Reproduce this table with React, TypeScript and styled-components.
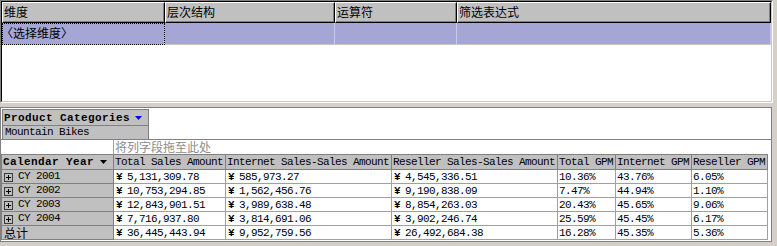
import React from 'react';
import styled, { createGlobalStyle } from 'styled-components';

const GlobalStyle = createGlobalStyle`
  html, body {
    margin: 0;
    padding: 0;
    background: #d4d0c8;
  }
  body {
    font-family: "Noto Sans CJK SC", "Liberation Sans", sans-serif;
    font-size: 12px;
    color: #000;
  }
`;

const MONO = `"Liberation Mono", "Noto Sans CJK SC", monospace`;

const filterColumns = ['维度', '层次结构', '运算符', '筛选表达式'];

const measures = [
  'Total Sales Amount',
  'Internet Sales-Sales Amount',
  'Reseller Sales-Sales Amount',
  'Total GPM',
  'Internet GPM',
  'Reseller GPM',
];

const rows = [
  { label: 'CY 2001', cells: ['5,131,309.78', '585,973.27', '4,545,336.51', '10.36%', '43.76%', '6.05%'] },
  { label: 'CY 2002', cells: ['10,753,294.85', '1,562,456.76', '9,190,838.09', '7.47%', '44.94%', '1.10%'] },
  { label: 'CY 2003', cells: ['12,843,901.51', '3,989,638.48', '8,854,263.03', '20.43%', '45.65%', '9.06%'] },
  { label: 'CY 2004', cells: ['7,716,937.80', '3,814,691.06', '3,902,246.74', '25.59%', '45.45%', '6.17%'] },
  { label: '总计', total: true, cells: ['36,445,443.94', '9,952,759.56', '26,492,684.38', '16.28%', '45.35%', '5.36%'] },
];

const DownArrow = ({ color }: { color: string }) => (
  <svg width="7" height="4" viewBox="0 0 7 4">
    <polygon points="0,0 7,0 3.5,4" fill={color} />
  </svg>
);

const ExpandBox = () => (
  <svg width="9" height="9" viewBox="0 0 9 9">
    <rect x="0.5" y="0.5" width="8" height="8" fill="none" stroke="#3a3a3a" />
    <line x1="2" y1="4.5" x2="7" y2="4.5" stroke="#000" />
    <line x1="4.5" y1="2" x2="4.5" y2="7" stroke="#000" />
  </svg>
);

const App = () => {
  return (
    <>
      <GlobalStyle />
      <Window>
        <FilterPanel>
          <FilterInner>
            <FilterGrid>
              {filterColumns.map((c) => (
                <HeadCell key={c}>{c}</HeadCell>
              ))}
              <SelCell $focus>
                <SelText>〈选择维度〉</SelText>
              </SelCell>
              <SelCell />
              <SelCell />
              <SelCell />
            </FilterGrid>
          </FilterInner>
        </FilterPanel>

        <PivotPanel>
          <FilterZone>
            <FieldHead>
              Product Categories
              <DownArrow color="#0000ff" />
            </FieldHead>
            <FieldValue>Mountain Bikes</FieldValue>
          </FilterZone>

          <PivotGrid>
            <DropCorner />
            <DropCell>
              <CjkText>将列字段拖至此处</CjkText>
            </DropCell>

            <RowAxisHead>
              Calendar Year
              <DownArrow color="#000" />
            </RowAxisHead>
            {measures.map((m) => (
              <MeasureHead key={m}>{m}</MeasureHead>
            ))}

            {rows.map((r) => (
              <React.Fragment key={r.label}>
                <RowHead>
                  {!r.total && <ExpandBox />}
                  {r.total ? <CjkText>{r.label}</CjkText> : <RowLabel>{r.label}</RowLabel>}
                </RowHead>
                {r.cells.map((v, i) => (
                  <DataCell key={i}>
                    {i < 3 && <Yen>¥</Yen>}
                    {v}
                  </DataCell>
                ))}
              </React.Fragment>
            ))}
          </PivotGrid>
        </PivotPanel>
      </Window>
    </>
  );
};

const Window = styled.div`
  width: 777px;
  height: 246px;
  box-sizing: border-box;
  padding-right: 4px;
  display: flex;
  flex-direction: column;
  overflow: hidden;
  background: #d4d0c8;
`;

const FilterPanel = styled.div`
  height: 103px;
  flex-shrink: 0;
  box-sizing: border-box;
  border: 1px solid;
  border-color: #808080 #ffffff #ffffff #808080;
`;

const FilterInner = styled.div`
  height: 100%;
  box-sizing: border-box;
  background: #fff;
  border: 1px solid;
  border-color: #000 #c8c8c8 #c8c8c8 #000;
`;

const FilterGrid = styled.div`
  display: grid;
  grid-template-columns: 163px 170px 122px 1fr;
`;

const HeadCell = styled.div`
  height: 21px;
  box-sizing: border-box;
  background: #c0c0c0;
  border-top: 1px solid #fff;
  border-left: 1px solid #fff;
  border-right: 1px solid #000;
  border-bottom: 1px solid #000;
  box-shadow: inset -1px -1px 0 #808080;
  padding-left: 1px;
  line-height: 18px;
  white-space: nowrap;
`;

const SelCell = styled.div<{ $focus?: boolean }>`
  height: 22px;
  box-sizing: border-box;
  background: #a6a6d6;
  border-right: 1px solid #cacae6;
  border-bottom: 1px solid #c8c8c8;
  line-height: 20px;
  white-space: nowrap;
  ${(p) => p.$focus && 'outline: 1px dotted #000; outline-offset: -1px;'}
`;

const SelText = styled.span`
  display: inline-block;
  margin-left: -1px;
`;

const PivotPanel = styled.div`
  flex: 1;
  margin-top: 4px;
  margin-bottom: 4px;
  margin-right: 1px;
  box-sizing: border-box;
  background: #fff;
  border: 1px solid #808080;
  padding-top: 1px;
  overflow: hidden;
`;

const FilterZone = styled.div`
  padding-left: 1px;
  border-bottom: 1px solid #808080;
`;

const FieldHead = styled.div`
  width: 147px;
  height: 17px;
  box-sizing: border-box;
  display: flex;
  align-items: center;
  gap: 5px;
  padding-left: 1px;
  background: #c0c0c0;
  border: 1px solid #808080;
  font: bold 11px ${MONO};
  letter-spacing: 0.4px;
  white-space: nowrap;
`;

const FieldValue = styled.div`
  width: 147px;
  height: 13px;
  box-sizing: border-box;
  padding-left: 2px;
  background: #c0c0c0;
  border-left: 1px solid #808080;
  border-right: 1px solid #808080;
  font: 11px/13px ${MONO};
  letter-spacing: -0.6px;
  white-space: nowrap;
`;

const PivotGrid = styled.div`
  display: grid;
  grid-template-columns: 113px 112px 166px 166px 58px 76px 76px;
`;

const DropCorner = styled.div`
  height: 15px;
  box-sizing: border-box;
  border-right: 1px solid #a0a0a0;
  border-bottom: 1px solid #808080;
`;

const DropCell = styled.div`
  grid-column: 2 / 8;
  height: 15px;
  box-sizing: border-box;
  padding-left: 1px;
  border-bottom: 1px solid #808080;
  color: #8c8c8c;
  display: flex;
  align-items: center;
  white-space: nowrap;
`;

const CjkText = styled.span`
  display: inline-block;
  height: 12px;
  font: 12px/12px "Noto Sans CJK SC", sans-serif;
  letter-spacing: 0;
  white-space: nowrap;
`;

const RowAxisHead = styled.div`
  height: 15px;
  box-sizing: border-box;
  display: flex;
  align-items: center;
  gap: 6px;
  padding-left: 1px;
  background: #c0c0c0;
  border-left: 1px solid #808080;
  border-right: 1px solid #808080;
  border-bottom: 1px solid #808080;
  font: bold 11px ${MONO};
  letter-spacing: 0.4px;
  white-space: nowrap;
`;

const MeasureHead = styled.div`
  height: 15px;
  box-sizing: border-box;
  padding-left: 1px;
  background: #c0c0c0;
  border-right: 1px solid #808080;
  border-bottom: 1px solid #808080;
  font: 11px/14px ${MONO};
  letter-spacing: -0.6px;
  white-space: nowrap;
`;

const RowHead = styled.div`
  height: 14px;
  box-sizing: border-box;
  display: flex;
  align-items: center;
  padding-left: 2px;
  background: #c0c0c0;
  border-left: 1px solid #808080;
  border-right: 1px solid #808080;
  border-bottom: 1px solid #808080;

  svg {
    margin-top: 2px;
    margin-right: 5px;
  }
`;

const RowLabel = styled.span`
  font: 11px/13px ${MONO};
  letter-spacing: -0.6px;
  white-space: nowrap;
`;

const DataCell = styled.div`
  height: 14px;
  box-sizing: border-box;
  display: flex;
  align-items: center;
  padding-left: 1px;
  border-right: 1px solid #a0a0a0;
  border-bottom: 1px solid #a0a0a0;
  font: 11px/12px ${MONO};
  letter-spacing: -0.6px;
  white-space: nowrap;
`;

const Yen = styled.span`
  display: inline-block;
  width: 12px;
  font: bold 11px/12px "Liberation Mono", monospace;
  letter-spacing: 0;
  padding-left: 1px;
  box-sizing: border-box;
`;

export default App;
